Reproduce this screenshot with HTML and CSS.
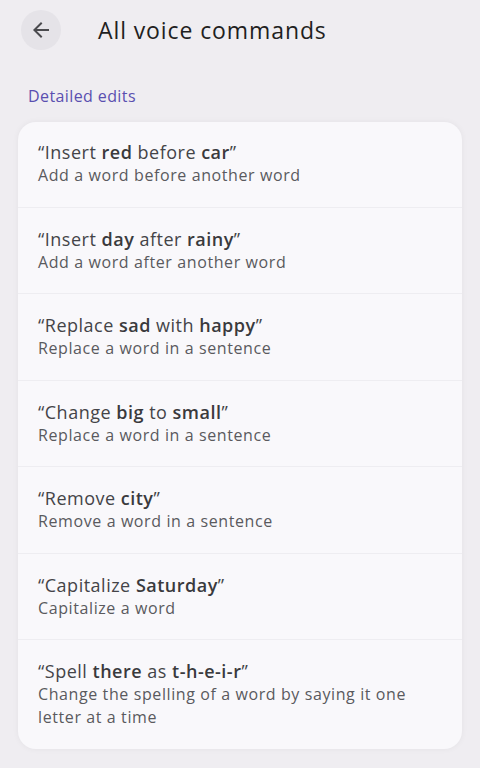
FILE: index.html
```html
<!DOCTYPE html>
<html lang="en">
<head>
    <meta charset="UTF-8">
    <meta name="viewport" content="width=device-width, initial-scale=1.0">
    <title>All voice commands</title>
    <link rel="stylesheet" href="styles.css">
</head>
<body>
    <header class="top-bar">
        <button class="back-btn" aria-label="Back">
            <svg width="24" height="24" viewBox="0 0 24 24">
                <path d="M20 11H7.83l5.59-5.59L12 4l-8 8 8 8 1.41-1.41L7.83 13H20v-2z" fill="#4a4a4e"/>
            </svg>
        </button>
        <h1>All voice commands</h1>
    </header>

    <h2 class="section-title">Detailed edits</h2>

    <ul class="command-list">
        <li class="command">
            <div class="command-title">&ldquo;Insert <b>red</b> before <b>car</b>&rdquo;</div>
            <div class="command-desc">Add a word before another word</div>
        </li>
        <li class="command">
            <div class="command-title">&ldquo;Insert <b>day</b> after <b>rainy</b>&rdquo;</div>
            <div class="command-desc">Add a word after another word</div>
        </li>
        <li class="command">
            <div class="command-title">&ldquo;Replace <b>sad</b> with <b>happy</b>&rdquo;</div>
            <div class="command-desc">Replace a word in a sentence</div>
        </li>
        <li class="command">
            <div class="command-title">&ldquo;Change <b>big</b> to <b>small</b>&rdquo;</div>
            <div class="command-desc">Replace a word in a sentence</div>
        </li>
        <li class="command">
            <div class="command-title">&ldquo;Remove <b>city</b>&rdquo;</div>
            <div class="command-desc">Remove a word in a sentence</div>
        </li>
        <li class="command">
            <div class="command-title">&ldquo;Capitalize <b>Saturday</b>&rdquo;</div>
            <div class="command-desc">Capitalize a word</div>
        </li>
        <li class="command">
            <div class="command-title">&ldquo;Spell <b>there</b> as <b>t-h-e-i-r</b>&rdquo;</div>
            <div class="command-desc">Change the spelling of a word by saying it one letter at a time</div>
        </li>
    </ul>
</body>
</html>
```

FILE: styles.css
```css
body {
    font-family: "Open Sans", Roboto, sans-serif;
    margin: 0;
    background-color: #efedf1;
    color: #3b3b3e;
    min-height: 768px;
}
.top-bar {
    display: flex;
    align-items: center;
    height: 60px;
    padding: 0 0 0 21px;
}
.back-btn {
    width: 40px;
    height: 40px;
    border: none;
    border-radius: 50%;
    background-color: #e5e3e8;
    display: flex;
    align-items: center;
    justify-content: center;
    padding: 0;
    margin-right: 37px;
}
.top-bar h1 {
    margin: 0;
    font-size: 23px;
    font-weight: 400;
    color: #1f1f22;
    letter-spacing: 0.9px;
}
.section-title {
    margin: 25px 0 0 28px;
    font-size: 16px;
    font-weight: 400;
    color: #5a4fb0;
    line-height: 22px;
    letter-spacing: 0.4px;
}
.command-list {
    list-style: none;
    margin: 15px 18px 0;
    padding: 0;
    background-color: #f9f8fb;
    border-radius: 18px;
    box-shadow: 0 0 6px rgba(0, 0, 0, 0.05);
    overflow: hidden;
}
.command {
    padding: 19px 20px 19.5px;
    border-top: 1px solid #eeedf1;
}
.command:first-child {
    border-top: none;
    padding-top: 18px;
}
.command-title {
    font-size: 18px;
    line-height: 24px;
    color: #444448;
    letter-spacing: 0.5px;
}
.command-title b {
    font-weight: 600;
    color: #3a3a3d;
}
.command-desc {
    font-size: 16px;
    line-height: 23px;
    color: #5a5a5e;
    letter-spacing: 0.6px;
}
```
